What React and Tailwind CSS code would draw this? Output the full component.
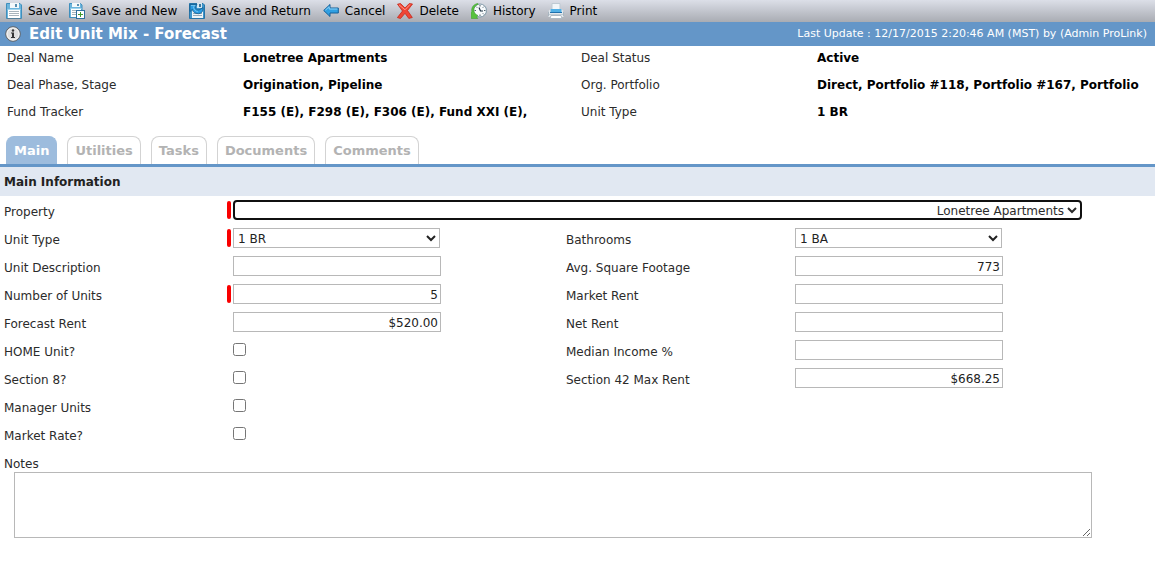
import React, { useState } from 'react';

// --- Toolbar icons ---

function SaveIcon() {
  return (
    <svg width="16" height="16" viewBox="0 0 16 16" aria-hidden="true">
      <path d="M.5.5h13.500l1.500 1.500v13.500H.5z" fill="#6db5dd" stroke="#3f8fbd" />
      <rect x="4" y="0" width="9" height="5" fill="#f4f8fb" />
      <rect x="9" y="1" width="2" height="3" fill="#5b8fb0" />
      <path d="M1.500 6.500h13" stroke="#a5d6ef" />
      <rect x="2" y="7" width="12" height="8" fill="#fff" />
      <path d="M3 8.500h10M3 10.500h10M3 12.500h10" stroke="#a9b4bc" />
      <path d="M1 15.500h14" stroke="#54809b" />
    </svg>
  );
}

function SaveNewIcon() {
  return (
    <svg width="16" height="16" viewBox="0 0 16 16" aria-hidden="true">
      <path d="M.5.5h11l1.500 1.500v12.500H.5z" fill="#6db5dd" stroke="#3f8fbd" />
      <rect x="3" y="0" width="8" height="4" fill="#f4f8fb" />
      <rect x="8" y="1" width="2" height="2" fill="#5b8fb0" />
      <path d="M1.500 5.500h11" stroke="#a5d6ef" />
      <rect x="2" y="6" width="10" height="8" fill="#fff" />
      <path d="M3 7.500h8M3 9.500h8M3 11.500h8" stroke="#a9b4bc" />
      <rect x="7.500" y="7.500" width="8" height="8" fill="#fff" stroke="#2f6f9d" />
      <path d="M11.500 9v5M9 11.500h5" stroke="#3f9a2c" />
    </svg>
  );
}

function SaveReturnIcon() {
  return (
    <svg width="16" height="16" viewBox="0 0 16 16" aria-hidden="true">
      <path d="M.5.5h13.500l1.500 1.500v13.500H.5z" fill="#3d95cc" stroke="#2674a8" />
      <rect x="8" y="0" width="5" height="5" fill="#d5e6f1" />
      <rect x="10" y="1" width="2" height="3" fill="#39749b" />
      <rect x="3" y="7" width="11" height="8" fill="#eef4f8" />
      <path d="M4 10.500h9M4 12.500h9" stroke="#93a9b8" />
      <path
        d="M1 1.500h7L6 3.800c.5 2 2 3.300 4 3.200l4-2.500c.5 3-1 6-4.500 6.200C6 10.800 3.800 9 3.300 6.300L1 8.500z"
        fill="#2a9be2"
        stroke="#135a8c"
        strokeWidth=".8"
        strokeLinejoin="round"
      />
      <path d="M2 2.500h4L4.500 4c.3 2.500 2 4.500 4.500 4.800" fill="none" stroke="#83cbf3" strokeWidth=".8" />
    </svg>
  );
}

function CancelIcon() {
  return (
    <svg width="16" height="16" viewBox="0 0 16 16" aria-hidden="true">
      <path d="M.7 7.500 7 1.500v3.500h8.300v5H7v3.500z" fill="#2f9fe2" stroke="#155f98" strokeLinejoin="round" />
      <path d="M2.300 7.200 6.200 3.700V6h8.300" fill="none" stroke="#8fd3f7" />
    </svg>
  );
}

function DeleteIcon() {
  return (
    <svg width="16" height="16" viewBox="0 0 16 16" aria-hidden="true">
      <path
        d="M.5 1.200 3.500.5 8 5 12.300.5l3.200.5-5 6.500 4.800 7-3.500.9L8 10.300l-4.500 5.200-3.100-.9L5.500 8z"
        fill="#f04535"
        stroke="#c5281c"
        strokeWidth=".8"
        strokeLinejoin="round"
      />
      <path d="m2 1.800 6 5 5-5.300" fill="none" stroke="#ff9585" />
    </svg>
  );
}

function HistoryIcon() {
  return (
    <svg width="16" height="16" viewBox="0 0 16 16" aria-hidden="true">
      <circle cx="9" cy="7.500" r="6.500" fill="#f7fafc" stroke="#7e98a8" />
      <path
        d="M9 2v1.500M9 11.500V13M14.500 7.500H13M5 7.500H3.500M12.800 3.700l-1 1M12.800 11.300l-1-1M5.200 3.700l1 1"
        stroke="#3b4d5c"
        strokeWidth=".9"
      />
      <path d="M8 4.500 9.500 8H12" fill="none" stroke="#1f3345" strokeWidth="1.200" />
      <path
        d="M7 .5C2.500 1 .2 4.500.8 8.500L0 9.500l.3 6h6.500l-1.300-1.800 1.500-1.200C4.500 11.500 3 9.800 2.800 7.500 2.600 4.500 4.200 2.300 7 1.500z"
        fill="#58c23f"
        stroke="#379a2a"
        strokeWidth=".5"
      />
    </svg>
  );
}

function PrintIcon() {
  return (
    <svg width="16" height="16" viewBox="0 0 16 16" aria-hidden="true">
      <path d="M4 .5h8V8H4z" fill="#f2f6f9" stroke="#bfcad3" />
      <path d="M0 8.500 2.500 6h11L16 8.500V13l-1 1H1l-1-1z" fill="#e3e9ee" />
      <path d="M.5 8.500V13M15.500 8.500V13" stroke="#a9b6c0" />
      <path d="M2.500 6h11v4h-11z" fill="#51b0e6" />
      <path d="M2 9.500h12" stroke="#1f70ad" />
      <path d="M1 11.500h14" stroke="#c3ccd3" />
      <path d="M3 12.500h10l1 3H2z" fill="#fff" stroke="#aebac4" />
    </svg>
  );
}

function InfoIcon() {
  return (
    <svg width="16" height="16" viewBox="0 0 16 16" aria-hidden="true">
      <circle cx="8" cy="8" r="7.300" fill="#dedede" stroke="#5d6166" />
      <circle cx="8" cy="8" r="6" fill="none" stroke="#f5f5f5" />
      <circle cx="8" cy="4.500" r="1.200" fill="#333" />
      <path d="M6 6.500h3V11h1v1H6v-1h1V7.500H6z" fill="#333" />
    </svg>
  );
}

const ACTIONS = [
  { label: 'Save', Icon: SaveIcon },
  { label: 'Save and New', Icon: SaveNewIcon },
  { label: 'Save and Return', Icon: SaveReturnIcon },
  { label: 'Cancel', Icon: CancelIcon },
  { label: 'Delete', Icon: DeleteIcon },
  { label: 'History', Icon: HistoryIcon },
  { label: 'Print', Icon: PrintIcon },
];

const SUMMARY = [
  ['Deal Name', 'Lonetree Apartments'],
  ['Deal Status', 'Active'],
  ['Deal Phase, Stage', 'Origination, Pipeline'],
  ['Org. Portfolio', 'Direct, Portfolio #118, Portfolio #167, Portfolio'],
  ['Fund Tracker', 'F155 (E), F298 (E), F306 (E), Fund XXI (E),'],
  ['Unit Type', '1 BR'],
];

const TABS = ['Main', 'Utilities', 'Tasks', 'Documents', 'Comments'];

// --- Form pieces ---

function Field({ id, label, required, children }) {
  return (
    <div className="flex h-7 items-start">
      <label htmlFor={id} className="w-[223px] shrink-0 leading-[30px]">{label}</label>
      <span className={`mt-1 mr-0.5 h-[18px] w-1 shrink-0 rounded-xs ${required ? 'bg-[#f90000]' : ''}`} />
      {children}
    </div>
  );
}

function TextField({ id, label, required, value = '' }) {
  return (
    <Field id={id} label={label} required={required}>
      <input
        id={id}
        type="text"
        defaultValue={value}
        className="mt-[3px] h-5 w-[208px] border border-[#b8b8b8] bg-white px-0.5 pt-px text-right text-[#222] outline-none"
      />
    </Field>
  );
}

function SelectField({ id, label, required, options }) {
  return (
    <Field id={id} label={label} required={required}>
      <select id={id} className="mt-[3px] h-5 w-[207px] border border-[#b8b8b8] bg-white pt-px text-[#222]">
        {options.map((o) => <option key={o}>{o}</option>)}
      </select>
    </Field>
  );
}

function CheckField({ id, label }) {
  return (
    <Field id={id} label={label}>
      <input id={id} type="checkbox" className="mt-1.5 size-[13px]" />
    </Field>
  );
}

export default function App() {
  const [activeTab, setActiveTab] = useState('Main');

  return (
    <div className="min-h-screen bg-white font-['DejaVu_Sans',Verdana,sans-serif] text-[12px] text-[#2b2b2b]">

      {/* Action toolbar */}
      <div className="flex h-[22px] items-center gap-3 bg-linear-to-b from-[#dcdfe8] to-[#a9acb3] pl-1.5 text-black">
        {ACTIONS.map(({ label, Icon }) => (
          <button key={label} type="button" className="flex items-center gap-1.5 whitespace-nowrap leading-5">
            <Icon />
            {label}
          </button>
        ))}
      </div>

      {/* Title bar */}
      <header className="flex h-6 items-center justify-between bg-[#6496c8] pr-2 pl-[5px] text-white">
        <div className="flex items-center gap-2">
          <InfoIcon />
          <h1 className="pt-px text-[15px] font-bold">Edit Unit Mix - Forecast</h1>
        </div>
        <span className="pt-px text-[11px]">Last Update : 12/17/2015 2:20:46 AM (MST) by (Admin ProLink)</span>
      </header>

      {/* Deal summary */}
      <dl className="grid grid-cols-2 gap-y-[3px] pl-[7px] leading-6">
        {SUMMARY.map(([term, value]) => (
          <div key={term} className="flex whitespace-nowrap">
            <dt className="w-[236px] shrink-0">{term}</dt>
            <dd className="font-bold text-black">{value}</dd>
          </div>
        ))}
      </dl>

      {/* Tabs */}
      <nav className="mt-3 flex gap-2.5 border-b-3 border-[#6496c8] pl-1.5">
        {TABS.map((tab) => (
          <button
            key={tab}
            type="button"
            onClick={() => setActiveTab(tab)}
            className={`h-7 rounded-t-lg border border-b-0 px-[7px] text-[13px] font-bold ${
              tab === activeTab ? 'border-[#9dbcdd] bg-[#9dbcdd] text-white' : 'border-[#d3d3d3] bg-white text-[#b3b3b3]'
            }`}
          >
            {tab}
          </button>
        ))}
      </nav>

      <main>
        <h2 className="mb-px bg-[#e1e8f2] pt-px pl-1 font-bold leading-7 text-[#222]">Main Information</h2>

        <form>
          <div className="grid grid-cols-2 pr-[27px] pl-1">
            <div className="col-span-2 pr-[46px]">
              <Field id="property" label="Property" required>
                <select
                  id="property"
                  className="mt-[3px] h-5 min-w-0 flex-1 rounded border-2 border-[#101010] bg-white pt-px text-right text-[#2b2b2b]"
                >
                  <option>Lonetree Apartments</option>
                </select>
              </Field>
            </div>

            <div>
              <SelectField id="unit-type" label="Unit Type" required options={['1 BR', '2 BR', '3 BR']} />
              <TextField id="unit-description" label="Unit Description" />
              <TextField id="number-of-units" label="Number of Units" required value="5" />
              <TextField id="forecast-rent" label="Forecast Rent" value="$520.00" />
              <CheckField id="home-unit" label="HOME Unit?" />
              <CheckField id="section-8" label="Section 8?" />
              <CheckField id="manager-units" label="Manager Units" />
              <CheckField id="market-rate" label="Market Rate?" />
            </div>

            <div>
              <SelectField id="bathrooms" label="Bathrooms" options={['1 BA', '2 BA']} />
              <TextField id="square-footage" label="Avg. Square Footage" value="773" />
              <TextField id="market-rent" label="Market Rent" />
              <TextField id="net-rent" label="Net Rent" />
              <TextField id="median-income" label="Median Income %" />
              <TextField id="max-rent" label="Section 42 Max Rent" value="$668.25" />
            </div>
          </div>

          <label htmlFor="notes" className="block h-[23px] pl-1 leading-[30px]">Notes</label>
          <div className="pr-[63px] pl-3.5">
            <textarea id="notes" className="block h-[66px] w-full border border-[#b8b8b8] bg-white p-0.5" />
          </div>
        </form>
      </main>
    </div>
  );
}
